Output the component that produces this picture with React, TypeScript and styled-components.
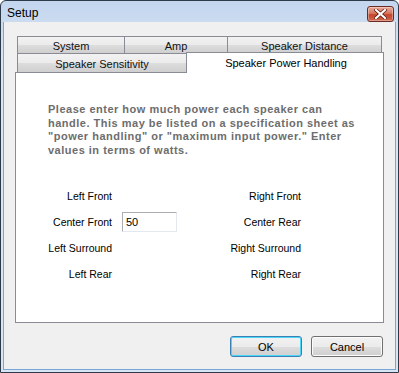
import React from 'react'
import styled, { createGlobalStyle } from 'styled-components'

const GlobalStyle = createGlobalStyle`
  html, body {
    margin: 0;
    padding: 0;
    background: #ffffff;
  }
`

const Window = styled.div`
  box-sizing: border-box;
  width: 399px;
  height: 373px;
  display: flex;
  flex-direction: column;
  border: 1px solid #2d3a4a;
  border-radius: 6px 6px 0 0;
  background: linear-gradient(#c3d6ee, #d9e5f4 60px);
  font-family: 'Liberation Sans', Arial, sans-serif;
  overflow: hidden;
`

const TitleBar = styled.div`
  height: 21px;
  display: flex;
  align-items: center;
  justify-content: space-between;
  padding: 0 4px 0 6px;
`

const Title = styled.span`
  font-family: 'Liberation Sans', Arial, sans-serif;
  font-size: 12px;
  color: #000;
  margin-top: 3px;
`

const CloseButton = styled.div`
  box-sizing: border-box;
  width: 27px;
  height: 16px;
  margin-top: 4px;
  border: 1px solid #6b2a22;
  border-radius: 3px;
  background: linear-gradient(#e9a99b 0%, #d8775f 45%, #c5452b 55%, #d06a4f 100%);
  display: flex;
  align-items: center;
  justify-content: center;
  box-shadow: inset 0 0 0 1px rgba(255, 255, 255, 0.35);
`

const Client = styled.div`
  flex: 1;
  margin: 0 2px 2px;
  border: 1px solid #78a6d6;
  border-top: none;
  background: #f0f0f0;
  display: flex;
  flex-direction: column;
  padding: 14px 11px 0 11px;
`

const TabControl = styled.div`
  display: flex;
  flex-direction: column;
  width: 369px;
`

const TabRow = styled.div<{ $top?: boolean }>`
  display: flex;
  padding-left: 2px;
  height: ${({ $top }) => ($top ? '17px' : '19px')};
  align-items: flex-end;
`

const Tab = styled.div<{ $w: number }>`
  box-sizing: border-box;
  width: ${({ $w }) => $w}px;
  height: 100%;
  border: 1px solid #898c95;
  border-bottom: none;
  margin-right: -1px;
  background: linear-gradient(#f2f2f2 0%, #ebebeb 50%, #dddddd 51%, #cfcfcf 100%);
  font-size: 11px;
  color: #111;
  display: flex;
  align-items: center;
  justify-content: center;
  padding-top: 1px;
`

const ActiveTab = styled.div<{ $w: number }>`
  position: relative;
  z-index: 1;
  box-sizing: border-box;
  width: ${({ $w }) => $w}px;
  height: 21px;
  margin-bottom: -1px;
  border: 1px solid #898c95;
  border-bottom: none;
  background: #ffffff;
  font-size: 11px;
  color: #000;
  display: flex;
  align-items: flex-start;
  justify-content: center;
  padding-top: 4px;
  padding-left: 2px;
`

const Panel = styled.div`
  box-sizing: border-box;
  height: 251px;
  border: 1px solid #898c95;
  background: #ffffff;
  padding: 30px 0 0 32px;
`

const Intro = styled.p`
  margin: 0;
  width: 318px;
  font-family: 'Liberation Sans', Arial, sans-serif;
  font-weight: bold;
  font-size: 11px;
  letter-spacing: 0.5px;
  line-height: 13.5px;
  color: #6d6d6d;
`

const Fields = styled.div`
  display: grid;
  grid-template-columns: 96px 55px 114px 55px;
  grid-auto-rows: 26px;
  column-gap: 10px;
  margin: 26px 0 0 -32px;
  align-items: center;
`

const FieldLabel = styled.span`
  font-size: 10.5px;
  color: #000;
  text-align: right;
`

const NumberInput = styled.input`
  box-sizing: border-box;
  width: 55px;
  height: 20px;
  border: 1px solid #abadb3;
  border-right-color: #e3e9ef;
  border-bottom-color: #e3e9ef;
  border-radius: 1px;
  padding: 0 3px;
  font-family: 'Liberation Sans', Arial, sans-serif;
  font-size: 11px;
  color: #000;
  outline: none;
`

const ButtonBar = styled.div`
  display: flex;
  justify-content: flex-end;
  gap: 9px;
  margin-top: 13px;
  padding-right: 1px;
`

const Button = styled.button<{ $default?: boolean }>`
  box-sizing: border-box;
  width: 72px;
  height: 21px;
  border: 1px solid ${({ $default }) => ($default ? '#3c7fb1' : '#707070')};
  border-radius: 3px;
  background: linear-gradient(#f2f2f2 0%, #ebebeb 50%, #dddddd 51%, #cfcfcf 100%);
  box-shadow: ${({ $default }) =>
    $default ? 'inset 0 0 0 1px #48d6fb' : 'inset 0 0 0 1px #fcfcfc'};
  font-family: 'Liberation Sans', Arial, sans-serif;
  font-size: 11px;
  color: #000;
  padding: 0;
`

const leftFields = ['Left Front', 'Center Front', 'Left Surround', 'Left Rear']
const rightFields = ['Right Front', 'Center Rear', 'Right Surround', 'Right Rear']

export default function App() {
  return (
    <>
      <GlobalStyle />
      <Window>
        <TitleBar>
          <Title>Setup</Title>
          <CloseButton>
            <svg width="13" height="10" viewBox="0 0 13 10">
              <path
                d="M2 1 L11 9 M11 1 L2 9"
                stroke="#5a1a10"
                strokeWidth="3.6"
                strokeLinecap="square"
              />
              <path
                d="M2 1 L11 9 M11 1 L2 9"
                stroke="#ffffff"
                strokeWidth="2.2"
                strokeLinecap="square"
              />
            </svg>
          </CloseButton>
        </TitleBar>
        <Client>
          <TabControl>
            <TabRow $top>
              <Tab $w={108}>System</Tab>
              <Tab $w={104}>Amp</Tab>
              <Tab $w={155}>Speaker Distance</Tab>
            </TabRow>
            <TabRow>
              <Tab $w={170}>Speaker Sensitivity</Tab>
              <ActiveTab $w={198}>Speaker Power Handling</ActiveTab>
            </TabRow>
            <Panel>
              <Intro>
                Please enter how much power each speaker can handle. This may be
                listed on a specification sheet as "power handling" or "maximum
                input power." Enter values in terms of watts.
              </Intro>
              <Fields>
                {leftFields.map((label, i) => (
                  <React.Fragment key={label}>
                    <FieldLabel>{label}</FieldLabel>
                    <span>{i === 1 && <NumberInput defaultValue="50" />}</span>
                    <FieldLabel>{rightFields[i]}</FieldLabel>
                    <span />
                  </React.Fragment>
                ))}
              </Fields>
            </Panel>
          </TabControl>
          <ButtonBar>
            <Button $default>OK</Button>
            <Button>Cancel</Button>
          </ButtonBar>
        </Client>
      </Window>
    </>
  )
}
